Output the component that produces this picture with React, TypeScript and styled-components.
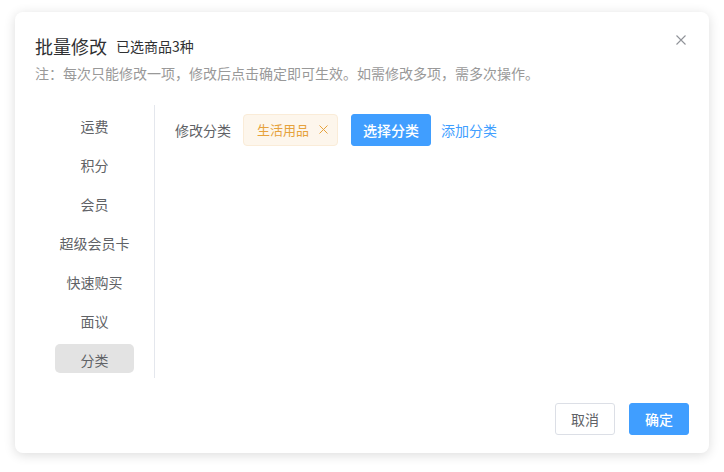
import React, { useState } from "react";
import styled, { createGlobalStyle } from "styled-components";

const GlobalStyle = createGlobalStyle`
    html, body {
        margin: 0;
        padding: 0;
        background: #ffffff;
        font-family: "Noto Sans CJK SC", "Noto Sans", sans-serif;
    }
`;

const menuItems = ["运费", "积分", "会员", "超级会员卡", "快速购买", "面议", "分类"];

const App = () => {
    const [active, setActive] = useState("分类");

    return (
        <>
            <GlobalStyle />
            <Page>
                <Dialog>
                    <CloseButton aria-label="关闭">
                        <svg width="10" height="10" viewBox="0 0 10 10">
                            <path d="M0.5 0.5 L9.5 9.5 M9.5 0.5 L0.5 9.5" stroke="#909399" strokeWidth="1.1" fill="none" />
                        </svg>
                    </CloseButton>

                    <Header>
                        <TitleRow>
                            <Title>批量修改</Title>
                            <SubTitle>已选商品3种</SubTitle>
                        </TitleRow>
                        <Note>注：每次只能修改一项，修改后点击确定即可生效。如需修改多项，需多次操作。</Note>
                    </Header>

                    <Body>
                        <Menu>
                            {menuItems.map((item) => (
                                <MenuItem key={item} $active={item === active} onClick={() => setActive(item)}>
                                    {item}
                                </MenuItem>
                            ))}
                        </Menu>

                        <Content>
                            <FieldRow>
                                <Label>修改分类</Label>
                                <Tag>
                                    生活用品
                                    <TagClose>
                                        <svg width="9" height="9" viewBox="0 0 9 9">
                                            <path d="M0.5 0.5 L8.5 8.5 M8.5 0.5 L0.5 8.5" stroke="#e6a23c" strokeWidth="1" fill="none" />
                                        </svg>
                                    </TagClose>
                                </Tag>
                                <Button $primary $pad={11}>选择分类</Button>
                                <LinkButton>添加分类</LinkButton>
                            </FieldRow>
                        </Content>
                    </Body>

                    <Footer>
                        <Button $pad={15}>取消</Button>
                        <Button $primary $pad={15}>确定</Button>
                    </Footer>
                </Dialog>
            </Page>
        </>
    );
};

export default App;

// stylesheet

const Page = styled.div`
    padding: 12px 15px;
`

const Dialog = styled.div`
    position: relative;
    width: 694px;
    height: 441px;
    box-sizing: border-box;
    background: #ffffff;
    border-radius: 8px;
    box-shadow: 0 2px 12px rgba(0, 0, 0, 0.14);
    display: flex;
    flex-direction: column;
`

const CloseButton = styled.div`
    position: absolute;
    top: 23px;
    right: 23px;
    width: 10px;
    height: 10px;
    display: flex;
    cursor: pointer;
`

const Header = styled.div`
    padding: 22px 20px 0 20px;
`

const TitleRow = styled.div`
    display: flex;
    align-items: center;
    height: 24px;
    gap: 9px;
`

const Title = styled.span`
    font-size: 18px;
    font-weight: 400;
    color: #303133;
    line-height: 24px;
`

const SubTitle = styled.span`
    font-size: 14px;
    color: #303133;
    line-height: 24px;
`

const Note = styled.div`
    margin-top: 6px;
    font-size: 14px;
    line-height: 18px;
    color: #999999;
`

const Body = styled.div`
    margin: 23px 20px 0 20px;
    height: 273px;
    display: flex;
`

const Menu = styled.div`
    width: 119px;
    border-right: 1px solid #e4e7ed;
    padding-top: 5px;
    display: flex;
    flex-direction: column;
    align-items: center;
    gap: 10px;
`

const MenuItem = styled.div<{ $active?: boolean }>`
    width: 79px;
    height: 29px;
    box-sizing: border-box;
    padding-top: 4px;
    line-height: 24px;
    text-align: center;
    font-size: 14px;
    color: #606266;
    border-radius: 5px;
    cursor: pointer;
    background: ${(p) => (p.$active ? "#e3e3e3" : "transparent")};
`

const Content = styled.div`
    flex: 1;
    padding: 9px 0 0 20px;
`

const FieldRow = styled.div`
    display: flex;
    align-items: center;
`

const Label = styled.span`
    font-size: 14px;
    color: #606266;
    margin-right: 12px;
`

const Tag = styled.div`
    height: 32px;
    box-sizing: border-box;
    display: flex;
    align-items: center;
    padding: 0 9px 0 13px;
    background: #fdf6ec;
    border: 1px solid #faecd8;
    border-radius: 4px;
    color: #e6a23c;
    font-size: 13px;
    margin-right: 13px;
    margin-top: -1px;
`

const TagClose = styled.span`
    display: flex;
    margin-left: 10px;
    cursor: pointer;
`

const Button = styled.button<{ $primary?: boolean; $pad?: number }>`
    height: 32px;
    padding: 0 ${(p) => p.$pad ?? 12}px;
    box-sizing: border-box;
    border-radius: 3px;
    font-family: "Noto Sans CJK SC", "Noto Sans", sans-serif;
    font-size: 14px;
    cursor: pointer;
    border: 1px solid ${(p) => (p.$primary ? "#409eff" : "#dcdfe6")};
    background: ${(p) => (p.$primary ? "#409eff" : "#ffffff")};
    color: ${(p) => (p.$primary ? "#ffffff" : "#606266")};
    font-weight: ${(p) => (p.$primary ? 500 : 400)};
`

const LinkButton = styled.span`
    margin-left: 10px;
    font-size: 14px;
    color: #409eff;
    cursor: pointer;
`

const Footer = styled.div`
    margin-top: 25px;
    padding: 0 20px;
    display: flex;
    justify-content: flex-end;
    gap: 14px;
`
